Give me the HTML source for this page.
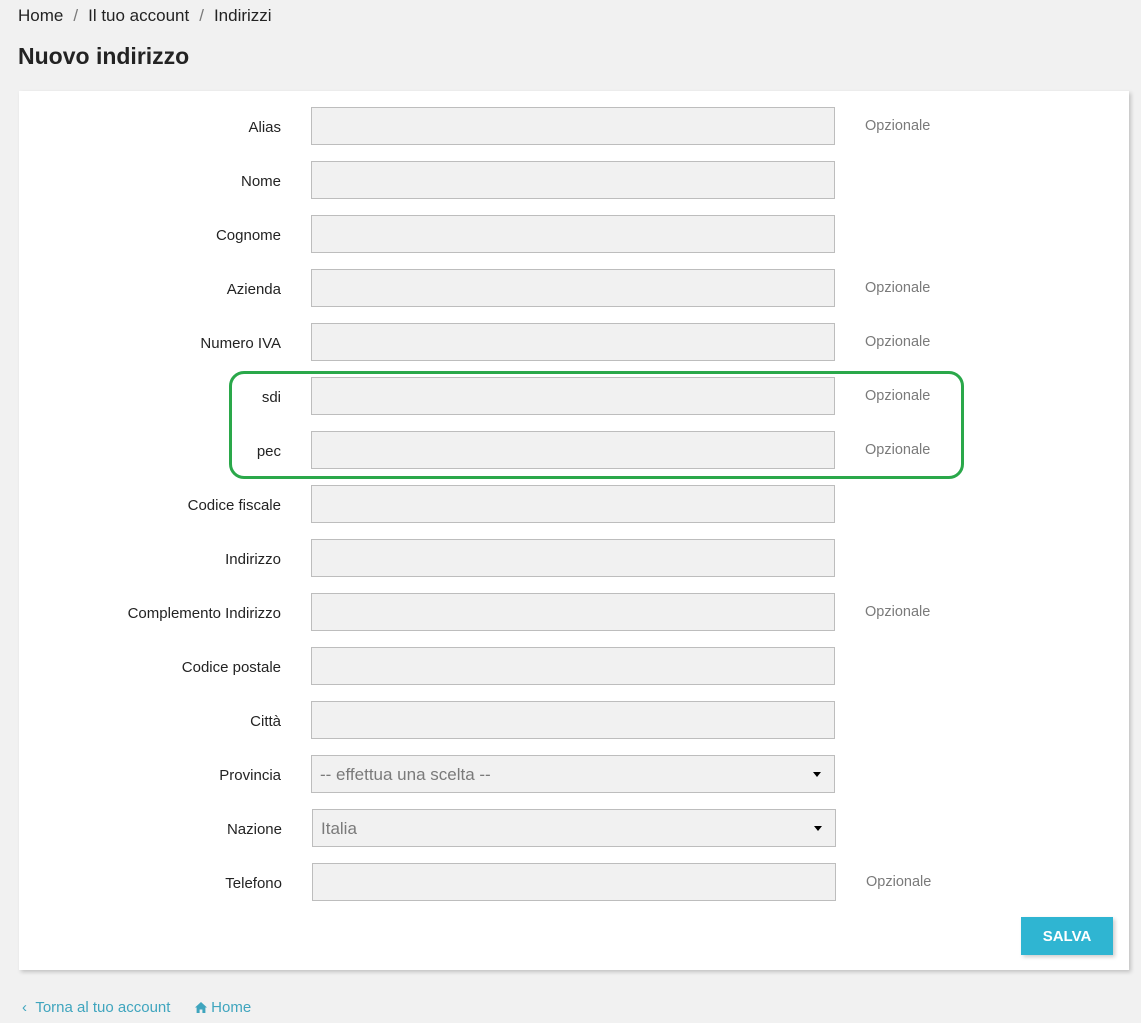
<!DOCTYPE html>
<html><head><meta charset="utf-8"><style>
body{margin:0;background:#f1f1f1;font-family:"Liberation Sans","DejaVu Sans",sans-serif;width:1141px;height:1023px;position:relative;overflow:hidden;color:#232323}
.a{position:absolute}
.bc{left:18px;top:6px;font-size:17px;color:#232323}
.bc span{color:#7a7a7a;margin:0 10px}
h1{position:absolute;left:18px;top:43px;margin:0;font-size:23px;font-weight:bold;color:#232323}
.card{left:19px;top:91px;width:1110px;height:879px;background:#fff;box-shadow:2px 2px 4px rgba(0,0,0,.2)}
.lbl{position:absolute;right:860px;font-size:15px;color:#232323;text-align:right;white-space:nowrap;margin-top:1px}
.inp{position:absolute;left:311px;width:522px;height:36px;background:#f1f1f1;border:1px solid #bdbdbd}
.opt{position:absolute;left:865px;font-size:14.5px;color:#7a7a7a;margin-top:1px}
.sel{font-size:17px;color:#7a7a7a;line-height:37px;padding-left:8px;box-sizing:border-box;height:38px;width:524px}
.arr{position:absolute;right:13px;top:16px;width:0;height:0;border-left:4px solid transparent;border-right:4px solid transparent;border-top:5px solid #000}
.green{left:229px;top:371px;width:729px;height:102px;border:3px solid #2aa84a;border-radius:15px}
.btn{left:1021px;top:917px;width:92px;height:38px;background:#2fb5d2;color:#fff;font-weight:bold;font-size:15px;text-align:center;line-height:39px;box-shadow:2px 2px 4px rgba(0,0,0,.2)}
.ft{top:999px;font-size:15px;color:#3fa5be}
</style></head><body>
<div class="a bc">Home<span>/</span>Il tuo account<span>/</span>Indirizzi</div>
<h1>Nuovo indirizzo</h1>
<div class="a card"></div>

<div class="lbl" style="top:118px">Alias</div><div class="inp" style="top:107px"></div><div class="opt" style="top:117px">Opzionale</div>
<div class="lbl" style="top:172px">Nome</div><div class="inp" style="top:161px"></div>
<div class="lbl" style="top:226px">Cognome</div><div class="inp" style="top:215px"></div>
<div class="lbl" style="top:280px">Azienda</div><div class="inp" style="top:269px"></div><div class="opt" style="top:279px">Opzionale</div>
<div class="lbl" style="top:334px">Numero IVA</div><div class="inp" style="top:323px"></div><div class="opt" style="top:333px">Opzionale</div>
<div class="lbl" style="top:388px">sdi</div><div class="inp" style="top:377px"></div><div class="opt" style="top:387px">Opzionale</div>
<div class="lbl" style="top:442px">pec</div><div class="inp" style="top:431px"></div><div class="opt" style="top:441px">Opzionale</div>
<div class="lbl" style="top:496px">Codice fiscale</div><div class="inp" style="top:485px"></div>
<div class="lbl" style="top:550px">Indirizzo</div><div class="inp" style="top:539px"></div>
<div class="lbl" style="top:604px">Complemento Indirizzo</div><div class="inp" style="top:593px"></div><div class="opt" style="top:603px">Opzionale</div>
<div class="lbl" style="top:658px">Codice postale</div><div class="inp" style="top:647px"></div>
<div class="lbl" style="top:712px">Città</div><div class="inp" style="top:701px"></div>
<div class="lbl" style="top:766px">Provincia</div><div class="inp sel" style="top:755px">-- effettua una scelta --<div class="arr"></div></div>
<div class="lbl" style="top:820px;right:859px">Nazione</div><div class="inp sel" style="top:809px;left:312px">Italia<div class="arr"></div></div>
<div class="lbl" style="top:874px;right:859px">Telefono</div><div class="inp" style="top:863px;left:312px"></div><div class="opt" style="top:873px;left:866px">Opzionale</div>

<div class="a green"></div>
<div class="a btn">SALVA</div>
<div class="a ft" style="left:22px">‹&nbsp;&nbsp;Torna al tuo account</div>
<div class="a ft" style="left:195px"><svg width="12" height="11" viewBox="0 0 12 11" style="vertical-align:-1px"><path d="M6 0L0 5.5h1.6V11h3V7.5h2.8V11h3V5.5H12z" fill="#3fa5be"/></svg> Home</div>
</body></html>
